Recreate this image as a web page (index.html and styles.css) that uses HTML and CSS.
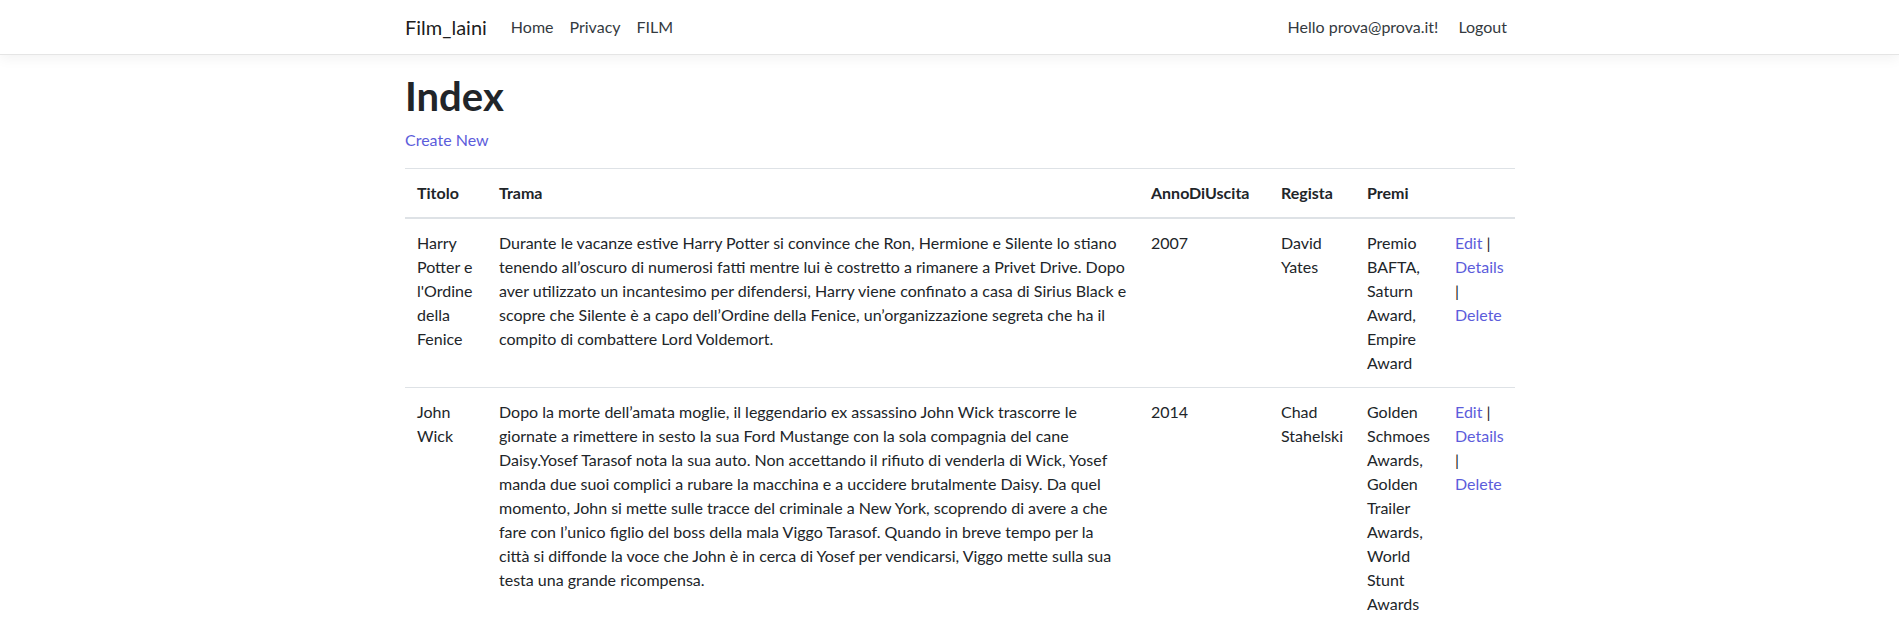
FILE: index.html
```html
<!DOCTYPE html>
<html lang="it">
<head>
<meta charset="utf-8">
<title>Index - Film_laini</title>
<link rel="stylesheet" href="styles.css">
</head>
<body>
<header class="topbar">
  <nav class="navbar container">
    <a class="brand" href="#">Film_laini</a>
    <ul class="nav-main">
      <li><a class="nav-link" href="#">Home</a></li>
      <li><a class="nav-link" href="#">Privacy</a></li>
      <li><a class="nav-link" href="#">FILM</a></li>
    </ul>
    <ul class="nav-user">
      <li><a class="nav-link" href="#">Hello prova@prova.it!</a></li>
      <li><a class="nav-link nav-logout" href="#">Logout</a></li>
    </ul>
  </nav>
</header>
<main class="container main">
  <h1 class="title">Index</h1>
  <p class="create"><a href="#">Create New</a></p>
  <table class="table">
    <thead>
      <tr>
        <th class="c-titolo">Titolo</th>
        <th class="c-trama">Trama</th>
        <th class="c-anno">AnnoDiUscita</th>
        <th class="c-regista">Regista</th>
        <th class="c-premi">Premi</th>
        <th class="c-azioni"></th>
      </tr>
    </thead>
    <tbody>
      <tr>
        <td>Harry Potter e l'Ordine della Fenice</td>
        <td>Durante le vacanze estive Harry Potter si convince che Ron, Hermione e Silente lo stiano tenendo all’oscuro di numerosi fatti mentre lui è costretto a rimanere a Privet Drive. Dopo aver utilizzato un incantesimo per difendersi, Harry viene confinato a casa di Sirius Black e scopre che Silente è a capo dell’Ordine della Fenice, un’organizzazione segreta che ha il compito di combattere Lord Voldemort.</td>
        <td>2007</td>
        <td>David Yates</td>
        <td>Premio BAFTA, Saturn Award, Empire Award</td>
        <td><a href="#">Edit</a> | <a href="#">Details</a> | <a href="#">Delete</a></td>
      </tr>
      <tr>
        <td>John Wick</td>
        <td>Dopo la morte dell’amata moglie, il leggendario ex assassino John Wick trascorre le giornate a rimettere in sesto la sua Ford Mustange con la sola compagnia del cane Daisy.Yosef Tarasof nota la sua auto. Non accettando il rifiuto di venderla di Wick, Yosef manda due suoi complici a rubare la macchina e a uccidere brutalmente Daisy. Da quel momento, John si mette sulle tracce del criminale a New York, scoprendo di avere a che fare con l’unico figlio del boss della mala Viggo Tarasof. Quando in breve tempo per la città si diffonde la voce che John è in cerca di Yosef per vendicarsi, Viggo mette sulla sua testa una grande ricompensa.</td>
        <td>2014</td>
        <td>Chad Stahelski</td>
        <td>Golden Schmoes Awards, Golden Trailer Awards, World Stunt Awards</td>
        <td><a href="#">Edit</a> | <a href="#">Details</a> | <a href="#">Delete</a></td>
      </tr>
    </tbody>
  </table>
</main>
</body>
</html>
```
FILE: styles.css
```css
* { box-sizing: border-box; }

html, body {
  margin: 0;
  padding: 0;
}

body {
  font-family: Lato, "Open Sans", sans-serif;
  font-size: 16px;
  line-height: 1.5;
  color: #212529;
  background: #fff;
}

a {
  color: #5c5cdb;
  text-decoration: none;
}

.container {
  width: 1110px;
  margin-left: calc(50% - 544.5px);
}

.topbar {
  height: 55px;
  background: #fff;
  border-bottom: 1px solid #e5e5e5;
  box-shadow: 0 4px 12px rgba(0, 0, 0, 0.05);
  margin-bottom: 16px;
}

.navbar {
  height: 54px;
  display: flex;
  align-items: center;
}

.brand {
  font-size: 20px;
  line-height: 30px;
  color: rgba(0, 0, 0, 0.9);
  margin-right: 16px;
}

.nav-main,
.nav-user {
  list-style: none;
  margin: 0;
  padding: 0;
  display: flex;
}

.nav-main {
  flex: 1;
}

.nav-link {
  display: block;
  padding: 8px;
  color: #343a40;
  line-height: 24px;
}

.nav-logout {
  padding-left: 12px;
}

.main {
  padding-top: 1px;
  padding-bottom: 16px;
}

.title {
  font-size: 40px;
  font-weight: 700;
  line-height: 48px;
  margin: 0 0 8px;
}

.create {
  margin: 0 0 16px;
}

.table {
  width: 1110px;
  table-layout: fixed;
  border-collapse: collapse;
}

.table th,
.table td {
  padding: 12px;
  border-top: 1px solid #dee2e6;
  text-align: left;
  vertical-align: top;
}

.table thead th {
  font-weight: 700;
  vertical-align: bottom;
  border-bottom: 2px solid #dee2e6;
}

.c-titolo { width: 82px; }
.c-trama { width: 652px; }
.c-anno { width: 130px; }
.c-regista { width: 86px; }
.c-premi { width: 88px; }
.c-azioni { width: 72px; }
```
